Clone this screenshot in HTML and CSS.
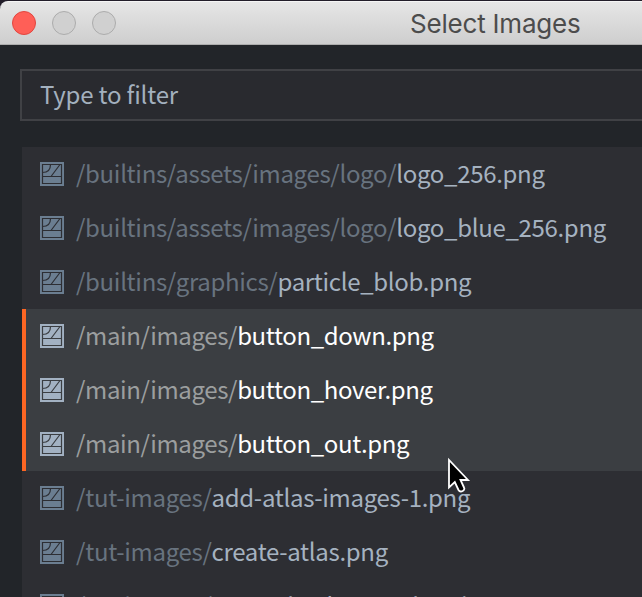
FILE: index.html
```html
<!DOCTYPE html>
<html lang="en">
<head>
<meta charset="utf-8">
<title>Select Images</title>
<link rel="stylesheet" href="styles.css">
</head>
<body>
<svg class="defs" width="0" height="0">
  <symbol id="image-icon" viewBox="0 0 24 24">
    <rect width="24" height="24" fill="currentColor"/>
    <path class="icon-line" d="M2.5 2.5H21.5V21.5H2.5ZM2.5 14.5H21.5M2.5 10.5C8 10.5 10.5 7.5 10.5 2.5M11 14.5L20 2.5"/>
  </symbol>
</svg>
<div class="window">
  <header class="titlebar">
    <div class="controls"><span class="dot close"></span><span class="dot"></span><span class="dot"></span></div>
    <h1 class="title">Select Images</h1>
  </header>
  <main class="content">
    <div class="filter">Type to filter</div>
    <ul class="list">
      <li class="row"><svg class="icon"><use href="#image-icon"/></svg><span class="dir">/builtins/assets/images/logo/</span><span class="name">logo_256.png</span></li>
      <li class="row"><svg class="icon"><use href="#image-icon"/></svg><span class="dir">/builtins/assets/images/logo/</span><span class="name">logo_blue_256.png</span></li>
      <li class="row"><svg class="icon"><use href="#image-icon"/></svg><span class="dir">/builtins/graphics/</span><span class="name">particle_blob.png</span></li>
      <li class="row selected"><svg class="icon"><use href="#image-icon"/></svg><span class="dir">/main/images/</span><span class="name">button_down.png</span></li>
      <li class="row selected"><svg class="icon"><use href="#image-icon"/></svg><span class="dir">/main/images/</span><span class="name">button_hover.png</span></li>
      <li class="row selected"><svg class="icon"><use href="#image-icon"/></svg><span class="dir">/main/images/</span><span class="name">button_out.png</span></li>
      <li class="row"><svg class="icon"><use href="#image-icon"/></svg><span class="dir">/tut-images/</span><span class="name">add-atlas-images-1.png</span></li>
      <li class="row"><svg class="icon"><use href="#image-icon"/></svg><span class="dir">/tut-images/</span><span class="name">create-atlas.png</span></li>
      <li class="row"><svg class="icon"><use href="#image-icon"/></svg><span class="dir">/tut-images/</span><span class="name">create-background-sprite.png</span></li>
    </ul>
  </main>
  <svg class="cursor" viewBox="0 0 24 36"><path d="M2 3V30.5L7.8 25L11.5 33Q13 35.5 16 33.8Q18 32.5 17 30.5L13.5 23H21Z" fill="#000" stroke="#fff" stroke-width="1.8"/></svg>
</div>
</body>
</html>
```
FILE: styles.css
```css
* { box-sizing: border-box; }
body { margin: 0; background: #221d29; }
.defs { position: absolute; }
.window {
  position: relative;
  height: 597px;
  padding-top: 1px;
  overflow: hidden;
  font: 24px/54px "Noto Sans CJK SC", sans-serif;
  letter-spacing: -0.32px;
}
.titlebar {
  display: flex;
  align-items: center;
  height: 44px;
  padding-left: 12px;
  border-top: 1px solid #f5f5f5;
  border-bottom: 1px solid #adadad;
  border-top-left-radius: 8px;
  background: linear-gradient(#e6e6e6, #cecece);
}
.controls { display: flex; gap: 16px; width: 398px; }
.dot { width: 24px; height: 24px; border: 1px solid #acacac; border-radius: 50%; background: #d0d0d0; }
.close { border-color: #e2463f; background: #ff5f57; }
.title { margin: 0; padding-top: 2px; color: #4c4c4c; font: 26px/40px Inter, sans-serif; letter-spacing: -0.2px; white-space: nowrap; }
.content { height: 552px; padding: 24px 0 0 20px; background: #222529; }
.filter {
  height: 52px;
  padding-left: 18px;
  border: 2px solid #404145;
  border-right: 0;
  background: #292a2f;
  color: #a3b0be;
  line-height: 46px;
  letter-spacing: -0.2px;
}
.list { margin: 26px 0 0 2px; padding: 0; background: #2d2e33; list-style: none; }
.row { display: flex; align-items: center; height: 54px; padding-left: 18px; color: #a5b2c0; line-height: 52px; white-space: pre; }
.dir, .name { height: 54px; }
.icon { flex: none; width: 24px; height: 24px; margin-right: 12px; color: #6b7e91; --line: #2d2e33; }
.icon-line { fill: none; stroke: var(--line); stroke-width: 1.2; }
.dir { color: #68737f; }
.selected { padding-left: 14px; border-left: 4px solid #fd6623; background: #3b3e42; color: #fff; letter-spacing: -0.37px; }
.selected .icon { color: #a2b1c2; --line: #3b3e42; }
.selected .dir { color: #9b9e9f; }
.cursor { position: absolute; left: 447px; top: 457px; width: 24px; height: 36px; }
```
